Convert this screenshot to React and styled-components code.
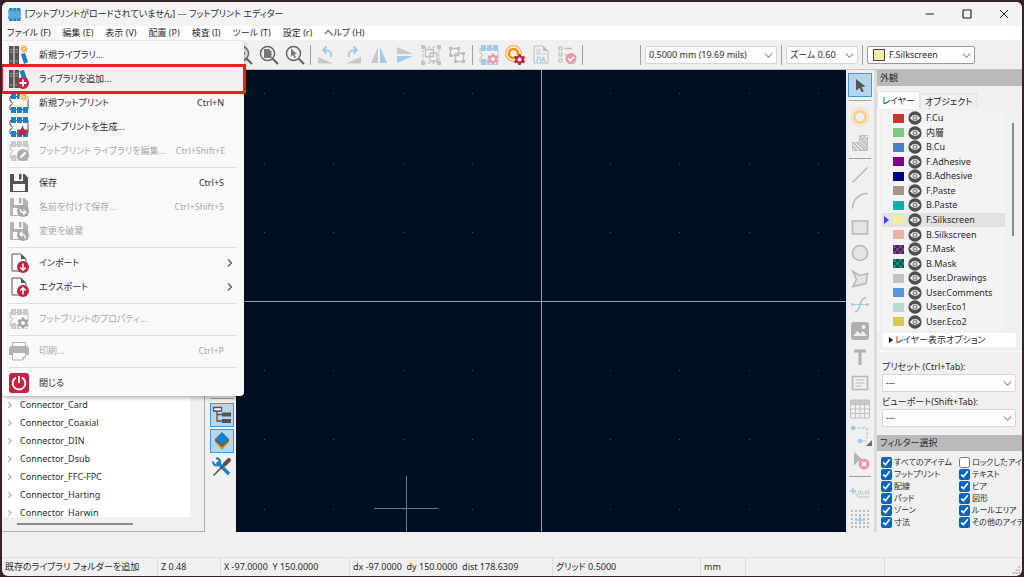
import styled, { createGlobalStyle, css } from "styled-components";

const menus = [
  "ファイル (F)",
  "編集 (E)",
  "表示 (V)",
  "配置 (P)",
  "検査 (I)",
  "ツール (T)",
  "設定 (r)",
  "ヘルプ (H)",
];

const libraries = [
  "Connector_Card",
  "Connector_Coaxial",
  "Connector_DIN",
  "Connector_Dsub",
  "Connector_FFC-FPC",
  "Connector_Harting",
  "Connector_Harwin",
];

const layers = [
  { name: "F.Cu", color: "#c83434" },
  { name: "内層", color: "#7fc87f" },
  { name: "B.Cu", color: "#4d7fc4" },
  { name: "F.Adhesive", color: "#840084" },
  { name: "B.Adhesive", color: "#000084" },
  { name: "F.Paste", color: "#a4948c" },
  { name: "B.Paste", color: "#00b0ae" },
  { name: "F.Silkscreen", color: "#f2eda1", active: true },
  { name: "B.Silkscreen", color: "#e8b2a7" },
  { name: "F.Mask", color: "#4a2560", check: "#75438a" },
  { name: "B.Mask", color: "#04574f", check: "#158a7c" },
  { name: "User.Drawings", color: "#c2c2c2" },
  { name: "User.Comments", color: "#5994dc" },
  { name: "User.Eco1", color: "#b4dbd2" },
  { name: "User.Eco2", color: "#d8c852" },
];

const filters = [
  { name: "すべてのアイテム", on: true },
  { name: "ロックしたアイテム", on: false },
  { name: "フットプリント", on: true },
  { name: "テキスト", on: true },
  { name: "配線", on: true },
  { name: "ビア", on: true },
  { name: "パッド", on: true },
  { name: "図形", on: true },
  { name: "ゾーン", on: true },
  { name: "ルールエリア", on: true },
  { name: "寸法", on: true },
  { name: "その他のアイテム", on: true },
];

const BLUE = "#1a81c4";
const RED = "#bf2641";
const DARK = "#545454";

const Svg = ({ size = 20, children, ...rest }) => (
  <svg
    width={size}
    height={size}
    viewBox="0 0 20 20"
    fill="none"
    aria-hidden="true"
    {...rest}
  >
    {children}
  </svg>
);

const gearPath =
  "M-1.200-5.500h2.400l.4 1.700 1.100.6 1.700-.5 1.200 2-1.300 1.200v1l1.300 1.200-1.200 2-1.700-.5-1.100.6-.4 1.700h-2.400l-.4-1.700-1.100-.6-1.700.5-1.200-2 1.300-1.200v-1l-1.300-1.200 1.200-2 1.700.5 1.100-.6z";

const Gear = ({ x, y, color, hole = "#f0f0f0" }) => (
  <g transform={`translate(${x} ${y})`}>
    <path d={gearPath} fill={color} />
    <circle r="2" fill={hole} />
  </g>
);

const Spark = () => (
  <g stroke="#f7a531" strokeWidth="1.200">
    <path d="M15 0v8M11 4h8M12.200 1.200l5.600 5.600M17.800 1.200l-5.600 5.600" />
    <circle cx="15" cy="4" r="1.500" fill="#f9f9f9" />
  </g>
);

const Books = ({ children, low }) => (
  <Svg>
    <path d="M0 1h4.500v18H0zM5.500 1H10v18H5.500z" fill={DARK} />
    <path d="M1 4.500h2.500M1 7h2.500M6.500 4.500H9M6.500 7H9M1 16h2.500M6.500 16H9" stroke="#a8a8a8" />
    <path d={low ? "M10.500 2l4.500-1 3 9-4 3z" : "M12 9l4-1 3 9-4 2z"} fill={BLUE} />
    {children}
  </Svg>
);

const NewLibraryIcon = () => (
  <Books>
    <Spark />
  </Books>
);

const AddLibraryIcon = () => (
  <Books low>
    <circle cx="14" cy="14" r="6" fill={RED} />
    <path d="M14 10.500v7M10.500 14h7" stroke="#fff" strokeWidth="1.800" />
  </Books>
);

const Footprint = ({ color = BLUE, line = DARK, cut, children, size }) => (
  <Svg size={size}>
    <path
      d="M1 3.500v4.500a2.200 2.200 0 0 1 0 4.500v4h18v-13z"
      stroke={line}
      strokeWidth="1"
    />
    <path
      d={
        cut
          ? "M2 0h5v6H2zM8 0h4v6H8zM2 14h5v6H2zM8 14h5v6H8zM14 14h5v6h-5z"
          : "M2 0h5v6H2zM8 0h5v6H8zM14 0h5v6h-5zM2 14h5v6H2zM8 14h5v6H8zM14 14h5v6h-5z"
      }
      fill={color}
    />
    {children}
  </Svg>
);

const NewFootprintIcon = () => (
  <Footprint cut>
    <circle cx="15" cy="4" r="4.500" fill="#f9f9f9" />
    <Spark />
  </Footprint>
);

const GenerateIcon = () => (
  <Footprint>
    <path
      d="M13.500 8.500l1.700 3.900 4.300.4-3.200 2.900.9 4.300-3.700-2.300-3.700 2.300.9-4.300-3.200-2.900 4.300-.4z"
      fill={RED}
    />
  </Footprint>
);

const EditLibraryIcon = () => (
  <Footprint color="#c9c9c9" line="#bdbdbd">
    <circle cx="14" cy="14" r="6" fill="#adadad" />
    <path d="M11.500 16.500l5-5" stroke="#f9f9f9" strokeWidth="2.400" />
  </Footprint>
);

const PropertiesIcon = () => (
  <Footprint color="#c9c9c9" line="#bdbdbd">
    <circle cx="14" cy="14" r="6" fill="#f9f9f9" />
    <Gear x={14} y={14} color="#a3a3a3" hole="#f9f9f9" />
  </Footprint>
);

const Floppy = ({ color = DARK, children }) => (
  <Svg>
    <path d="M1 1h14.500L19 4.500V19H1z" fill={color} />
    <path d="M5 1h9v7H5zM4 11h12v7H4z" fill="#f9f9f9" />
    <path d="M10 1h2.500v5.500H10z" fill={color} />
    {children}
  </Svg>
);

const SaveAsIcon = () => (
  <Floppy color="#b3b3b3">
    <circle cx="14" cy="14" r="6" fill="#a8a8a8" />
    <path
      d="M11 12c.5 3 2.500 4 5.500 3.500M14.500 13l2.500 2.500-3 2"
      stroke="#fff"
      strokeWidth="1.300"
    />
  </Floppy>
);

const RevertIcon = () => (
  <Floppy color="#b3b3b3">
    <circle cx="14" cy="14" r="6" fill="#a8a8a8" />
    <path
      d="M16 17.500c1-3-1-4.500-4.500-4.500M13.500 10.500L11 13l2.500 2.500"
      stroke="#fff"
      strokeWidth="1.300"
    />
  </Floppy>
);

const Sheet = ({ up }) => (
  <Svg>
    <path d="M3 1h9l5 5v12H3z" fill="#f9f9f9" stroke={DARK} />
    <path d="M12 1v5h5z" fill={DARK} />
    <circle cx="14" cy="14" r="6" fill={RED} />
    <path
      d={
        up
          ? "M14 17.500v-6M11.300 13.500L14 10.800l2.700 2.700"
          : "M14 10.500v6M11.300 14.500l2.700 2.700 2.700-2.700"
      }
      stroke="#fff"
      strokeWidth="1.600"
    />
  </Svg>
);

const PrinterIcon = () => (
  <Svg>
    <path d="M3.500 1.500h13V6h-13z" stroke="#b3b3b3" />
    <path d="M2 5h16l2 2v7H0V7z" fill="#b3b3b3" />
    <path d="M3.500 11.500h13V16l-3 3h-10z" fill="#f9f9f9" stroke="#b3b3b3" />
    <path d="M16.500 16h-3v3z" fill="#b3b3b3" />
  </Svg>
);

const PowerIcon = () => (
  <Svg>
    <rect width="20" height="20" rx="3" fill={RED} />
    <path d="M7 4.700a6.300 6.300 0 1 0 6 0M10 3v7" stroke="#fff" strokeWidth="1.900" />
  </Svg>
);

const Magnifier = ({ children }) => (
  <Svg>
    <circle cx="8.500" cy="8.500" r="7" stroke="#666" strokeWidth="1.500" />
    <path d="M13.500 13.500l5.500 5.500" stroke="#666" strokeWidth="2.200" />
    {children}
  </Svg>
);

const ZoomOutIcon = () => (
  <Magnifier>
    <path d="M5 8.500h7" stroke={DARK} strokeWidth="1.600" />
  </Magnifier>
);
const ZoomPageIcon = () => (
  <Magnifier>
    <path d="M5 4h5l2.500 2.500V13H5z" fill="#777" />
  </Magnifier>
);
const ZoomObjectIcon = () => (
  <Magnifier>
    <path d="M6 3.500l6 5.500-2.500.3 1.500 3-1.500.7-1.400-3-2.100 1.500z" fill="#777" />
  </Magnifier>
);

const UndoIcon = () => (
  <Svg>
    <path d="M1 12l15 6.500H1z" fill="#c9c9c9" />
    <path
      d="M14 12c1-5-2-7-7-7M9.500 1.500L6 5l3.500 3.500"
      stroke="#9fcbe6"
      strokeWidth="1.800"
    />
  </Svg>
);
const RedoIcon = () => (
  <Svg>
    <path d="M18 12v6.500H3z" fill="#c9c9c9" />
    <path
      d="M6 12c-1-5 2-7 7-7M10.500 1.500L14 5l-3.500 3.500"
      stroke="#9fcbe6"
      strokeWidth="1.800"
    />
  </Svg>
);
const MirrorHIcon = () => (
  <Svg>
    <path d="M9 2v16H2z" fill="#c9c9c9" />
    <path d="M11 2v16h7z" fill="#9fcbe6" />
  </Svg>
);
const MirrorVIcon = () => (
  <Svg>
    <path d="M2 2v7h16z" fill="#c9c9c9" />
    <path d="M2 11v7l16-7z" fill="#9fcbe6" />
  </Svg>
);
const GroupIcon = () => (
  <Svg>
    <path d="M2 2h16v16H2z" stroke="#bdbdbd" strokeDasharray="3 1.500" />
    <path d="M0 0h4v4H0zM16 0h4v4h-4zM0 16h4v4H0zM16 16h4v4h-4z" fill="#c4c4c4" />
    <path
      d="M4.500 4.500h8v7h-8zM9 8h7v8H9z"
      fill="#f5f5f5"
      stroke="#bdbdbd"
      strokeWidth="1.300"
    />
  </Svg>
);
const UngroupIcon = () => (
  <Svg>
    <path
      d="M3.500 3.500h8v7h-8zM8.500 8.500h8v8h-8z"
      fill="#f5f5f5"
      stroke="#bdbdbd"
      strokeWidth="1.300"
    />
    <path
      d="M2 2h3v3H2zM10 2h3v3h-3zM2 9h3v3H2zM7 15h3v3H7zM15 15h3v3h-3zM15 7h3v3h-3z"
      fill="#bdbdbd"
    />
  </Svg>
);
const FootprintSettingsIcon = () => (
  <Footprint color="#9fcbe6" line="#c0c0c0">
    <circle cx="14" cy="14" r="5.500" fill="#f0f0f0" />
    <Gear x={14} y={14} color="#e79aa8" />
  </Footprint>
);
const PadSettingsIcon = () => (
  <Svg>
    <circle cx="8.500" cy="8.500" r="7.800" stroke="#f6b552" strokeWidth="1.200" />
    <circle cx="8.500" cy="8.500" r="4.500" stroke="#f39200" strokeWidth="2.600" />
    <circle cx="14.500" cy="14.500" r="5.500" fill="#f0f0f0" />
    <Gear x={14.500} y={14.500} color={RED} />
  </Svg>
);
const DatasheetIcon = () => (
  <Svg>
    <path d="M3 1h9l5 5v12H3z" stroke="#bdbdbd" />
    <path d="M12 1v5h5z" fill="#bdbdbd" />
    <path d="M5 5h5M5 7h5M5 9h10" stroke="#c9c9c9" />
    <path d="M5 16h1.500v-4h2.500l1 4h1.500l1-4 1 4h1.500" stroke="#9fcbe6" strokeWidth="1.200" />
  </Svg>
);
const ChecklistIcon = () => (
  <Svg>
    <path d="M2 2h3v3H2zM2 8h3v3H2zM2 14h3v3H2z" stroke="#bdbdbd" strokeWidth="1.200" />
    <path d="M7.500 3.500H15" stroke="#bdbdbd" strokeWidth="1.500" />
    <path d="M7.500 9.500h2" stroke="#bdbdbd" strokeWidth="1.500" />
    <circle cx="14" cy="13.500" r="5.500" fill="#e79aa8" />
    <path d="M11.200 13.500l2.200 2.200 3.600-4" stroke="#fff" strokeWidth="1.600" />
  </Svg>
);

const CursorIcon = () => (
  <Svg>
    <path d="M6 4l9.500 7.500-4 .5 2.300 4.300-2 1-2.200-4.300L6 15.500z" fill={DARK} />
  </Svg>
);
const PadIcon = () => (
  <Svg>
    <circle cx="10" cy="10" r="9" stroke="#f9d9a6" />
    <circle cx="10" cy="10" r="5.800" stroke="#f8cf93" strokeWidth="3" />
  </Svg>
);
const HatchIcon = () => (
  <Svg>
    <path d="M9.500 2.500h8v15h-15v-8h7z" stroke="#c4c4c4" />
    <path
      d="M10 3l7.500 7.500M13 2.500l4.500 4.500M10 6l7.500 7.500M10 9.500l7.500 7.500M7 9.500l8 8M3 9.500l8 8M2.500 13l4.500 4.500"
      stroke="#b5b5b5"
      strokeWidth="1.300"
    />
  </Svg>
);
const line = { stroke: "#b8b8b8", strokeWidth: "1.600" };
const LineIcon = () => (
  <Svg>
    <path d="M2.500 17.500l15-15" {...line} />
  </Svg>
);
const ArcIcon = () => (
  <Svg>
    <path d="M2.500 17.500c0-8 6-15 15-15" {...line} />
  </Svg>
);
const RectIcon = () => (
  <Svg>
    <path d="M2.500 4h15v13h-15z" fill="#e4e4e4" {...line} />
  </Svg>
);
const CircleIcon = () => (
  <Svg>
    <circle cx="10" cy="10" r="7.500" fill="#e4e4e4" {...line} />
  </Svg>
);
const PolygonIcon = () => (
  <Svg>
    <path d="M3 2.500l6.500 4 8-2-1.500 10L3 17.500l3.500-7z" fill="#e4e4e4" {...line} />
  </Svg>
);
const BezierIcon = () => (
  <Svg>
    <path d="M5 17c4-1 4-4 5-7.500S12 3 16 2.500" {...line} />
    <path d="M2 9.500h16" stroke="#9fcbe6" />
    <circle cx="2.500" cy="9.500" r="1.500" fill="#9fcbe6" />
    <circle cx="17.500" cy="9.500" r="1.500" fill="#9fcbe6" />
  </Svg>
);
const ImageIcon = () => (
  <Svg>
    <rect x="1" y="1" width="18" height="18" rx="3" fill="#b0b0b0" />
    <path d="M3 15l4.500-5 3 3 2.500-3 4 5z" fill="#f0f0f0" />
    <circle cx="13.500" cy="6" r="2" fill="#f0f0f0" />
  </Svg>
);
const TextIcon = () => (
  <Svg>
    <path d="M4 4h12M10 4v14" stroke="#b0b0b0" strokeWidth="3" />
  </Svg>
);
const TextBoxIcon = () => (
  <Svg>
    <path d="M2.500 3.500h15v13h-15z" {...line} />
    <path d="M5.500 7h9M5.500 10h9M5.500 13h6" stroke="#b8b8b8" />
  </Svg>
);
const TableIcon = () => (
  <Svg>
    <path d="M.5 1h19v4H.500z" fill="#c9c9c9" />
    <path
      d="M.5 1h19v18H.500zM.5 5.500h19M.5 10h19M.5 14.500h19M5.500 1v18M10 1v18M14.500 1v18"
      stroke="#c0c0c0"
    />
  </Svg>
);
const DimensionIcon = () => (
  <Svg overflow="visible">
    <path d="M3 3h14v11" stroke="#b5b5b5" strokeDasharray="3 1.500" />
    <path d="M9 16h8" stroke="#9fcbe6" />
    <circle cx="3" cy="3" r="2.300" fill="#9fcbe6" />
    <circle cx="10" cy="16" r="2.300" fill="#9fcbe6" />
    <path d="M22 15v6h-6z" fill="#6d6d6d" />
  </Svg>
);
const DeleteIcon = () => (
  <Svg>
    <path d="M4 1l9 8-4 .5-5 5z" fill="#b5b5b5" />
    <circle cx="14" cy="13" r="5.500" fill="#e79aa8" />
    <path d="M12 11l4 4M16 11l-4 4" stroke="#fff" strokeWidth="1.700" />
  </Svg>
);
const OriginIcon = () => (
  <Svg>
    <path d="M0 8h6M3 5v6" stroke="#9fcbe6" strokeWidth="1.500" />
    <path d="M5 9l3 5h11" stroke="#c0c0c0" />
    <ellipse cx="11.500" cy="9.500" rx="1" ry="1.500" stroke="#b8b8b8" strokeWidth=".8" />
    <ellipse cx="16" cy="9.500" rx="1" ry="1.500" stroke="#b8b8b8" strokeWidth=".8" />
    <path
      d="M9.300 7q-1.500 2.500 0 5M18.300 7q1.500 2.500 0 5M13.700 11v1"
      stroke="#b8b8b8"
      strokeWidth=".8"
    />
  </Svg>
);
const GridOriginIcon = () => (
  <Svg>
    {[2, 6, 10, 14, 18].map((y) => (
      <path
        key={y}
        d={`M1 ${y}h18`}
        stroke="#bdbdbd"
        strokeWidth="2"
        strokeDasharray="2 2"
      />
    ))}
    <path d="M10 6v10M5 11h10" stroke="#9fcbe6" strokeWidth="1.600" />
  </Svg>
);
const TreeIcon = () => (
  <Svg>
    <path d="M5 6v10h6M5 9.500h6" stroke={DARK} strokeWidth="1.300" />
    <path d="M1.500 2.500h8v3.500h-8z" fill="#fff" stroke={DARK} strokeWidth="1.300" />
    <path d="M10 7.500h9v4h-9zM10 14h9v4h-9z" fill={DARK} />
  </Svg>
);
const LayersIcon = () => (
  <Svg>
    <path d="M3 11l7 8 7-8z" fill="#f39200" />
    <path d="M3 8v3l7 6 7-6V8z" fill="#f39200" />
    <path d="M3 8v1.500l7 6.500 7-6.500V8z" fill={DARK} />
    <path d="M10 1l7 7-7 6.500L3 8z" fill={BLUE} />
  </Svg>
);
const ToolsIcon = () => (
  <Svg>
    <path d="M5 5l12 12" stroke={BLUE} strokeWidth="3.400" />
    <path d="M4 1.500a3.500 3.500 0 1 1-2.800 3" stroke={BLUE} strokeWidth="2.200" />
    <path d="M1.500 18.500L14 6" stroke={DARK} strokeWidth="1.600" />
    <path d="M12.500 7.500L17 3" stroke={DARK} strokeWidth="4" strokeLinecap="round" />
  </Svg>
);

const Chevron = ({ d = "M6 3l7 7-7 7", size = 10, color = "#555" }) => (
  <Svg size={size}>
    <path d={d} stroke={color} strokeWidth="2.400" />
  </Svg>
);

const EyeIcon = () => (
  <Svg size={14}>
    <circle cx="10" cy="10" r="9.500" fill="#4e4e4e" />
    <path d="M2.500 10q7.500-9 15 0-7.500 9-15 0z" fill="#f3f3f3" />
    <circle cx="10" cy="10" r="3.600" fill="#8d8d8d" />
    <circle cx="10" cy="10" r="1.500" fill="#f3f3f3" />
  </Svg>
);

const fileMenu = [
  [
    { label: "新規ライブラリ...", icon: <NewLibraryIcon /> },
    { label: "ライブラリを追加...", icon: <AddLibraryIcon />, marked: true },
    { label: "新規フットプリント", icon: <NewFootprintIcon />, keys: "Ctrl+N" },
    { label: "フットプリントを生成...", icon: <GenerateIcon /> },
    {
      label: "フットプリント ライブラリを編集...",
      icon: <EditLibraryIcon />,
      keys: "Ctrl+Shift+E",
      disabled: true,
    },
  ],
  [
    { label: "保存", icon: <Floppy />, keys: "Ctrl+S" },
    {
      label: "名前を付けて保存...",
      icon: <SaveAsIcon />,
      keys: "Ctrl+Shift+S",
      disabled: true,
    },
    { label: "変更を破棄", icon: <RevertIcon />, disabled: true },
  ],
  [
    { label: "インポート", icon: <Sheet />, sub: true },
    { label: "エクスポート", icon: <Sheet up />, sub: true },
  ],
  [{ label: "フットプリントのプロパティ...", icon: <PropertiesIcon />, disabled: true }],
  [{ label: "印刷...", icon: <PrinterIcon />, keys: "Ctrl+P", disabled: true }],
  [{ label: "閉じる", icon: <PowerIcon /> }],
];

const topTools = [
  [
    ["縮小", ZoomOutIcon],
    ["ページに合わせる", ZoomPageIcon],
    ["オブジェクトに合わせる", ZoomObjectIcon],
  ],
  [
    ["左回転", UndoIcon],
    ["右回転", RedoIcon],
    ["左右反転", MirrorHIcon],
    ["上下反転", MirrorVIcon],
    ["グループ化", GroupIcon],
    ["グループ解除", UngroupIcon],
  ],
  [
    ["フットプリントのプロパティ", FootprintSettingsIcon],
    ["パッドのプロパティ", PadSettingsIcon],
    ["データシート", DatasheetIcon],
    ["チェック", ChecklistIcon],
  ],
];

const drawTools = [
  [["選択", CursorIcon, true]],
  [
    ["パッド", PadIcon],
    ["ゾーン", HatchIcon],
  ],
  [
    ["線", LineIcon],
    ["円弧", ArcIcon],
    ["矩形", RectIcon],
    ["円", CircleIcon],
    ["多角形", PolygonIcon],
    ["ベジェ", BezierIcon],
    ["画像", ImageIcon],
    ["テキスト", TextIcon],
    ["テキストボックス", TextBoxIcon],
    ["表", TableIcon],
    ["寸法線", DimensionIcon],
    ["削除", DeleteIcon],
  ],
  [
    ["原点", OriginIcon],
    ["グリッド原点", GridOriginIcon],
  ],
];

const sideTools = [
  [
    ["ライブラリツリー", TreeIcon, true],
    ["外観マネージャー", LayersIcon, true],
    ["プロパティ", ToolsIcon],
  ],
];

const ToolGroups = ({ groups }) =>
  groups.map((group) => (
    <ToolGroup key={group[0][0]}>
      {group.map(([label, Icon, on]) => (
        <ToolButton key={label} aria-label={label} $on={on}>
          <Icon />
        </ToolButton>
      ))}
    </ToolGroup>
  ));

const ComboArrow = () => <Chevron d="M2 6l8 8 8-8" size={9} color="#888" />;

const GRID = 69.2;

const Drawing = () => (
  <CanvasSvg viewBox="0 0 610 462" preserveAspectRatio="xMidYMid slice">
    {[-3, -2, -1, 1, 2, 3].map((row) =>
      [-4, -3, -2, -1, 1, 2, 3, 4].map((col) => (
        <rect
          key={`${row}${col}`}
          x={Math.round(305 + col * GRID)}
          y={Math.round(231 + row * GRID)}
          width="1"
          height="1"
          fill="#46525f"
        />
      ))
    )}
    <path d="M305.500 0v462M0 231.500h610" stroke="#9aa3ab" />
    <path d="M170.500 406v56M138 438.500h64" stroke="#6d7781" />
  </CanvasSvg>
);

const App = () => {
  return (
    <>
      <GlobalStyle />
      <Window>
        <TitleBar>
          <Footprint size={13} color={BLUE} line={BLUE}>
            <path d="M1 4h18v12H1z" fill="#5ba7d6" />
          </Footprint>
          <Title>[フットプリントがロードされていません] — フットプリント エディター</Title>
          <WindowButton aria-label="最小化">
            <Svg size={10}>
              <path d="M1 10h17" stroke="#222" strokeWidth="2" />
            </Svg>
          </WindowButton>
          <WindowButton aria-label="最大化">
            <Svg size={10}>
              <rect
                x="2"
                y="2"
                width="16"
                height="16"
                rx="1"
                stroke="#222"
                strokeWidth="2.400"
              />
            </Svg>
          </WindowButton>
          <WindowButton aria-label="ウィンドウを閉じる">
            <Svg size={10}>
              <path d="M2 2l16 16M18 2L2 18" stroke="#222" strokeWidth="2" />
            </Svg>
          </WindowButton>
        </TitleBar>

        <MenuBar>
          {menus.map((menu, i) => (
            <MenuTab key={menu} $open={i === 0}>
              {menu}
            </MenuTab>
          ))}
          <Menu role="menu">
            {fileMenu.map((group) => (
              <MenuGroup key={group[0].label}>
                {group.map((item) => (
                  <MenuItem
                    key={item.label}
                    role="menuitem"
                    disabled={item.disabled}
                    $marked={item.marked}
                  >
                    {item.icon}
                    <MenuLabel>{item.label}</MenuLabel>
                    {item.keys && <Keys>{item.keys}</Keys>}
                    {item.sub && <Chevron />}
                  </MenuItem>
                ))}
              </MenuGroup>
            ))}
          </Menu>
        </MenuBar>

        <Toolbar>
          <ToolGroups groups={topTools} />
          <Combos>
            <Divider />
            <Combo $width={132}>
              <select aria-label="グリッド">
                <option>0.5000 mm (19.69 mils)</option>
              </select>
              <ComboArrow />
            </Combo>
            <Divider />
            <Combo $width={72}>
              <select aria-label="ズーム">
                <option>ズーム 0.60</option>
              </select>
              <ComboArrow />
            </Combo>
            <Divider />
            <Combo $width={108} $strong>
              <Swatch />
              <select aria-label="レイヤー">
                <option>F.Silkscreen</option>
              </select>
              <ComboArrow />
            </Combo>
          </Combos>
        </Toolbar>

        <Main>
          <TreePanel>
            <Tree>
              {libraries.map((name) => (
                <TreeRow key={name}>
                  <Chevron size={8} color="#777" />
                  {name}
                </TreeRow>
              ))}
            </Tree>
            <ScrollTrack>
              <ScrollThumb />
            </ScrollTrack>
          </TreePanel>
          <SideTools>
            <ToolGroups groups={sideTools} />
          </SideTools>
          <Canvas>
            <Drawing />
          </Canvas>
          <DrawTools>
            <ToolGroups groups={drawTools} />
          </DrawTools>

          <Panel>
            <PanelTitle>外観</PanelTitle>
            <Tabs role="tablist">
              <Tab role="tab" aria-selected="true" $active>
                レイヤー
              </Tab>
              <Tab role="tab" aria-selected="false">
                オブジェクト
              </Tab>
            </Tabs>
            <LayerArea>
              <LayerList>
                {layers.map((layer) => (
                  <LayerRow key={layer.name} $active={layer.active}>
                    <LayerColor $color={layer.color} $check={layer.check} />
                    <EyeIcon />
                    {layer.name}
                  </LayerRow>
                ))}
              </LayerList>
              <LayerThumb />
            </LayerArea>
            <LayerOptions>
              <Svg size={6}>
                <path d="M3 0l14 10L3 20z" fill="#111" />
              </Svg>
              レイヤー表示オプション
            </LayerOptions>
            <Presets>
              <PresetLabel htmlFor="preset">プリセット (Ctrl+Tab):</PresetLabel>
              <Combo>
                <select id="preset">
                  <option>---</option>
                </select>
                <ComboArrow />
              </Combo>
              <PresetLabel htmlFor="viewport">ビューポート(Shift+Tab):</PresetLabel>
              <Combo>
                <select id="viewport">
                  <option>---</option>
                </select>
                <ComboArrow />
              </Combo>
            </Presets>
            <PanelTitle>フィルター選択</PanelTitle>
            <Filters>
              {filters.map((item) => (
                <Filter key={item.name}>
                  <Check type="checkbox" defaultChecked={item.on} />
                  {item.name}
                </Filter>
              ))}
            </Filters>
          </Panel>
        </Main>

        <StatusBar>
          <Status $width={156}>既存のライブラリ フォルダーを追加</Status>
          <Status $width={63}>Z 0.48</Status>
          <Status $width={129}>X -97.0000&nbsp; Y 150.0000</Status>
          <Status $width={203}>dx -97.0000&nbsp; dy 150.0000&nbsp; dist 178.6309</Status>
          <Status $width={148}>グリッド 0.5000</Status>
          <Status $width={45}>mm</Status>
          <Status $width={139} />
          <Grip>
            <Svg size={9}>
              <path
                d="M14 2h4M8 9h4M14 9h4M2 16h4M8 16h4M14 16h4"
                stroke="#b5b5b5"
                strokeWidth="4"
              />
            </Svg>
          </Grip>
        </StatusBar>
      </Window>
    </>
  );
};

const GlobalStyle = createGlobalStyle`
  * {
    box-sizing: border-box;
  }

  body {
    margin: 0;
    background: #38222a;
    color: #2b2b2b;
    font-family: "Noto Sans", "Noto Sans CJK JP", sans-serif;
    font-size: 9px;
    line-height: 14px;
    font-feature-settings: "palt";
  }

  button,
  select {
    margin: 0;
    padding: 0;
    border: 0;
    background: none;
    color: inherit;
    font: inherit;
    font-feature-settings: inherit;
  }

  svg {
    flex: none;
    display: block;
  }
`;

const Window = styled.div`
  display: flex;
  flex-direction: column;
  min-height: calc(100vh - 3px);
  margin: 2px 2px 1px;
  border-radius: 6px;
  overflow: hidden;
  background: #f0f0f0;
`;

const TitleBar = styled.header`
  display: flex;
  align-items: center;
  height: 24px;
  padding-left: 6px;
  background: #f3f3f3;
`;

const Title = styled.h1`
  flex: 1;
  margin: 0 0 0 4px;
  font-size: 9px;
  font-weight: 400;
  white-space: nowrap;
`;

const WindowButton = styled.button`
  display: flex;
  align-items: center;
  justify-content: center;
  width: 37px;
  height: 24px;
`;

const MenuBar = styled.nav`
  position: relative;
  display: flex;
  height: 14px;
  background: #fff;
`;

const MenuTab = styled.button`
  padding: 0 6px 0 5px;
  white-space: nowrap;
  background: ${({ $open }) => ($open ? "#f7f7f7" : "none")};

  & + & {
    padding-left: 6px;
  }
`;

const Menu = styled.div`
  position: absolute;
  z-index: 2;
  top: 15px;
  left: 0;
  width: 242px;
  padding: 2px 1px 1px;
  border-radius: 0 4px 4px 4px;
  background: #f9f9f9;
  box-shadow: 1px 2px 4px rgba(0, 0, 0, 0.3);
`;

const MenuGroup = styled.div`
  & + &::before {
    content: "";
    display: block;
    height: 1px;
    margin: 4px 6px 3px;
    background: #dedede;
  }
`;

const MenuItem = styled.button`
  display: flex;
  align-items: center;
  gap: 10px;
  width: 100%;
  height: 24px;
  padding: 0 8px 0 6px;
  text-align: left;
  white-space: nowrap;

  &:disabled {
    color: #a9a9a9;
  }

  ${({ $marked }) =>
    $marked &&
    css`
      background: #f0f0f0;
      outline: 3px solid #e62120;
    `}
`;

const MenuLabel = styled.span`
  flex: 1;
`;

const Keys = styled.span`
  margin-right: 11px;
`;

const Divider = styled.i`
  width: 1px;
  height: 20px;
  background: #a0a0a0;
`;

const ToolGroup = styled.div`
  display: flex;
  gap: 2px;
`;

const Toolbar = styled.div`
  display: flex;
  align-items: center;
  height: 30px;
  padding: 1px 0 0 229px;
  border-bottom: 1px solid #c4c4c4;

  ${ToolGroup}::after {
    content: "";
    width: 1px;
    height: 20px;
    margin: 2px 4px 2px 1px;
    background: #a0a0a0;
  }
`;

const ToolButton = styled.button`
  display: flex;
  align-items: center;
  justify-content: center;
  width: 24px;
  height: 24px;
  border: 1px solid ${({ $on }) => ($on ? "#3d9be6" : "transparent")};
  background: ${({ $on }) => ($on ? "#b4d6f3" : "none")};
`;

const Combos = styled.div`
  display: flex;
  align-items: center;
  gap: 4px;
  margin-left: 53px;
`;

const Combo = styled.div`
  display: flex;
  align-items: center;
  width: ${({ $width }) => ($width ? `${$width}px` : "100%")};
  height: 18px;
  padding: 0 3px;
  border: 1px solid ${({ $strong }) => ($strong ? "#9a9a9a" : "#d6d6d6")};
  border-radius: 2px;
  background: #fdfdfd;

  select {
    flex: 1;
    min-width: 0;
    appearance: none;
  }
`;

const Swatch = styled.span`
  width: 12px;
  height: 12px;
  margin: 0 4px 0 2px;
  border: 1px solid #444;
  background: #f2eda1;
`;

const Main = styled.main`
  flex: 1;
  display: flex;
`;

const TreePanel = styled.aside`
  display: flex;
  flex-direction: column;
  width: 203px;
  border: solid #b0b0b0;
  border-width: 0 1px 1px 0;
`;

const Tree = styled.ul`
  flex: 1 0 0;
  min-height: 0;
  overflow: hidden;
  margin: 0 14px 0 1px;
  padding: 326px 0 0 3px;
  list-style: none;
  background: #fff;
`;

const TreeRow = styled.li`
  display: flex;
  align-items: center;
  gap: 6px;
  height: 18px;
`;

const ScrollTrack = styled.div`
  height: 14px;
  padding: 6px 0 0 15px;
`;

const ScrollThumb = styled.div`
  width: 116px;
  height: 2px;
  background: #8a8a8a;
`;

const ToolColumn = styled.div`
  display: flex;
  flex-direction: column;
  align-items: center;

  ${ToolGroup} {
    flex-direction: column;
  }

  ${ToolGroup} + ${ToolGroup}::before {
    content: "";
    height: 1px;
    margin: 3px 1px 2px;
    background: #a0a0a0;
  }
`;

const SideTools = styled(ToolColumn)`
  width: 31px;
  padding: 328px 0 0 3px;

  ${ToolGroup} {
    padding-top: 4px;
    border-top: 1px solid #a0a0a0;
  }
`;

const Canvas = styled.section`
  position: relative;
  flex: 1;
  min-width: 0;
  background: #001023;
`;

const CanvasSvg = styled.svg`
  position: absolute;
  inset: 0;
  width: 100%;
  height: 100%;
`;

const DrawTools = styled(ToolColumn)`
  width: 28px;
  padding-top: 3px;
`;

const Panel = styled.aside`
  width: 148px;
  border-left: 3px solid #dcdcdc;
  overflow: hidden;
`;

const PanelTitle = styled.h2`
  margin: 0;
  padding: 1px 3px;
  background: #bababa;
  font-size: 9px;
  font-weight: 400;
`;

const Tabs = styled.div`
  display: flex;
  align-items: flex-end;
  padding-top: 5px;
`;

const Tab = styled.button`
  height: ${({ $active }) => ($active ? 18 : 16)}px;
  padding: 0 4px;
  border: 1px solid #e4e4e4;
  border-bottom: 0;
  background: ${({ $active }) => ($active ? "#fbfbfb" : "#f0f0f0")};
`;

const LayerArea = styled.div`
  display: flex;
  height: 222px;
  padding: 2px 0 2px 3px;
  border: solid #fafafa;
  border-width: 0 1px 0 2px;
`;

const LayerList = styled.ul`
  flex: 1;
  display: flex;
  flex-direction: column;
  margin: 0;
  padding: 0;
  list-style: none;
`;

const LayerRow = styled.li`
  position: relative;
  flex: 1;
  display: flex;
  align-items: center;
  gap: 4px;
  padding-left: 11px;
  background: ${({ $active }) => ($active ? "#e2e2e2" : "#f3f3f3")};

  ${({ $active }) =>
    $active &&
    css`
      &::before {
        content: "";
        position: absolute;
        left: 2px;
        border: solid transparent;
        border-width: 4px 0 4px 5px;
        border-left-color: #4040f0;
      }
    `}
`;

const LayerColor = styled.span`
  width: 11px;
  height: 9px;
  background: ${({ $color, $check }) =>
    $check
      ? `conic-gradient(${$color} 25%, ${$check} 0 50%, ${$color} 0 75%, ${$check} 0) 0 0 / 6px 6px`
      : $color};
`;

const LayerThumb = styled.div`
  width: 2px;
  height: 113px;
  margin: 12px 7px 0;
  background: #8a8a8a;
`;

const LayerOptions = styled.div`
  display: flex;
  align-items: center;
  gap: 1px;
  height: 14px;
  margin: 2px 6px 4px;
  padding-left: 5px;
  background: #fff;
  white-space: nowrap;
`;

const Presets = styled.div`
  padding: 8px 6px 8px 5px;
  border-top: 1px solid #fafafa;
`;

const PresetLabel = styled.label`
  display: block;

  * + & {
    margin-top: 3px;
  }
`;

const Filters = styled.div`
  display: grid;
  grid-template-columns: 78px 78px;
  grid-auto-rows: 12px;
  padding: 5px 0 0 4px;
  font-size: 8px;
`;

const Filter = styled.label`
  display: flex;
  align-items: center;
  gap: 2px;
  white-space: nowrap;
`;

const Check = styled.input`
  flex: none;
  width: 11px;
  height: 11px;
  margin: 0;
  accent-color: #0a63bd;
`;

const StatusBar = styled.footer`
  display: flex;
  height: 19px;
  margin-top: 25px;
  border-top: 1px solid #dedede;
`;

const Status = styled.span`
  width: ${({ $width }) => `${$width}px`};
  padding: 2px 3px;
  border-right: 1px solid #dcdcdc;
  white-space: nowrap;
`;

const Grip = styled.span`
  margin: auto 1px 1px auto;
`;

export default App;
